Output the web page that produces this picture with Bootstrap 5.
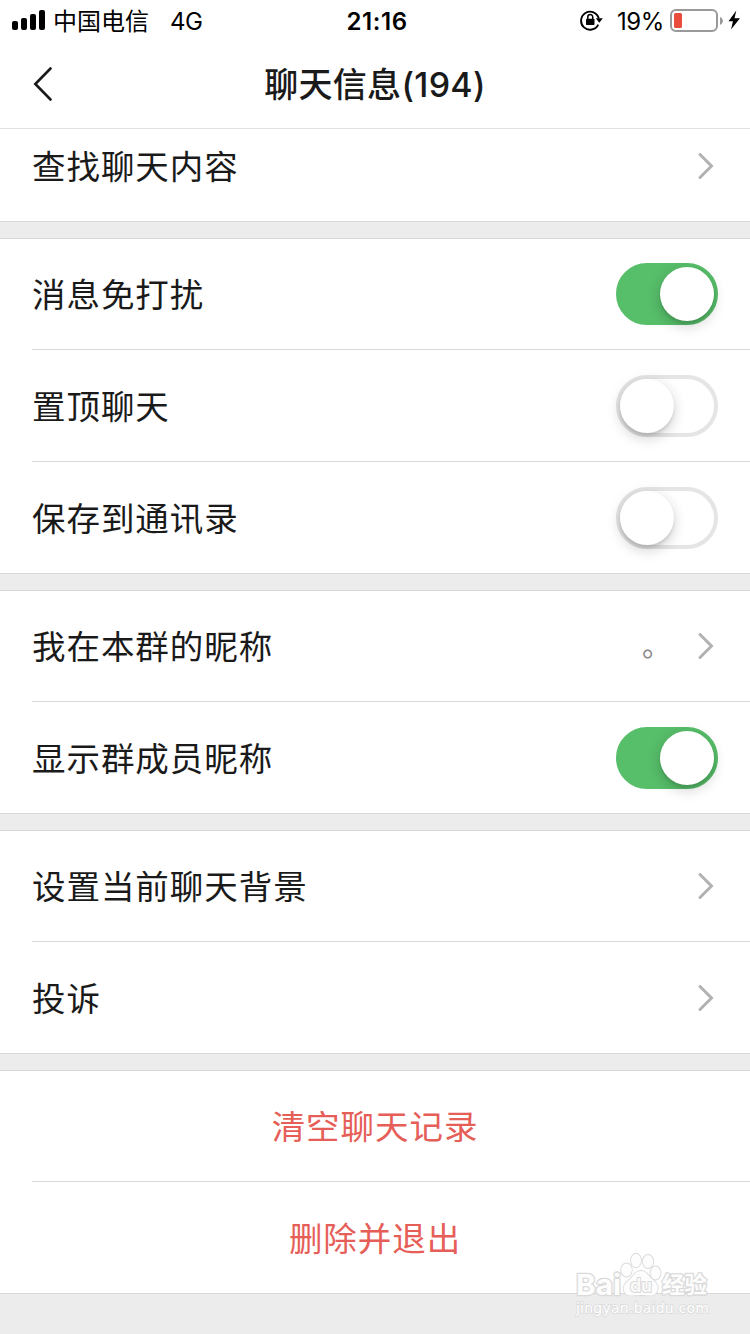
<!DOCTYPE html>
<html lang="zh-CN">
<head>
<meta charset="utf-8">
<meta name="viewport" content="width=device-width, initial-scale=1">
<title>聊天信息</title>
<link href="https://cdn.jsdelivr.net/npm/bootstrap@5.3.0/dist/css/bootstrap.min.css" rel="stylesheet">
<script src="https://cdn.jsdelivr.net/npm/bootstrap@5.3.0/dist/js/bootstrap.bundle.min.js" defer></script>
<style>
  body { background: #ececec; color: #1a1a1a; font-family: Inter, "Noto Sans CJK SC", sans-serif; height: 1334px; overflow: hidden; }
  .topbar { height: 129px; border-bottom: 1px solid #e2e2e2; }
  .status { height: 40px; font-size: 24px; line-height: 38px; color: #000; padding: 0 10px 0 12px; }
  .status span { padding-top: 3px; }
  .status .side { flex: 1 1 0; }
  .carrier { margin-left: 7px; }
  .network { margin-left: 21px; letter-spacing: -.6px; }
  .clock { font-weight: 600; letter-spacing: .6px; margin-left: 2px; }
  .percent { letter-spacing: -.4px; margin: 0 5px 0 14px; }
  .battery { margin-top: 2px; }
  .titlebar { height: 88px; padding: 2px 32px 0; }
  .titlebar h1 { font-size: 34px; font-weight: 500; line-height: 86px; letter-spacing: .3px; }
  .titlebar .edge { width: 40px; margin-top: -2px; }
  .group { background: #fff; border: solid #d9d9d9; border-width: 1px 0; margin-bottom: 16px; }
  .group .list-group-item { height: 112px; margin-left: 32px; padding: 0 32px 0 0; border: 0; border-bottom: 1px solid #d9d9d9; background: transparent; color: #1a1a1a; font-size: 33.5px; line-height: 48px; letter-spacing: .95px; }
  .group .list-group-item:first-child { height: 111px; }
  .group .list-group-item:last-child { border-bottom: 0; height: 111px; }
  .group.scrolled { border-top: 0; }
  .group.scrolled .list-group-item:only-child { height: 92px; padding-bottom: 18px; }
  .group .list-group-item.danger { color: #e65e58; }
  .group .list-group-item > span { padding-top: 1px; }
  .group .list-group-item:not(:first-child) > span { padding-top: 2px; }
  .chevron { margin-right: 3px; }
  .nickname { color: #888; margin-right: 25px; font-size: 29px; }
  .form-check-input.toggle { width: 102px; height: 62px; margin: 0; border: 4px solid #e5e5e5; border-radius: 31px; background: #fff; box-shadow: none; }
  .form-check-input.toggle::before { content: ""; display: block; width: 54px; height: 54px; border-radius: 50%; background: #fff; box-shadow: 0 6px 14px rgba(0,0,0,.14), 0 3px 3px rgba(0,0,0,.1), 0 0 16px rgba(0,0,0,.05); }
  .form-check-input.toggle:checked { background: #57be6a; border-color: #57be6a; }
  .form-check-input.toggle:checked::before { margin-left: 40px; }
  .watermark { right: 36px; bottom: 12px; }
</style>
</head>
<body>
<header class="topbar bg-white">
  <div class="status d-flex align-items-center">
    <div class="side d-flex align-items-center">
      <svg width="34" height="20" viewBox="0 0 34 20"><rect x="0" y="11" width="6" height="9" rx="2"/><rect x="9" y="8" width="6" height="12" rx="2"/><rect x="18" y="4" width="6" height="16" rx="2"/><rect x="27" y="0" width="6" height="20" rx="2"/></svg>
      <span class="carrier">中国电信</span><span class="network">4G</span>
    </div>
    <span class="clock">21:16</span>
    <div class="side d-flex align-items-center justify-content-end">
      <svg width="23" height="22" viewBox="0 0 23 22"><path d="M18.200 15.600A9 9 0 1 1 18.800 9.500" fill="none" stroke="#000" stroke-width="1.900"/><path d="M15.800 9.300H22.800L19.300 13.800Z"/><rect x="6" y="9.700" width="8.500" height="6.300" rx=".8"/><path d="M7.800 10V8a2.450 2.450 0 0 1 4.900 0v2" fill="none" stroke="#000" stroke-width="1.500"/></svg>
      <span class="percent">19%</span>
      <svg class="battery" width="71" height="24" viewBox="0 0 71 24"><rect x="2" y="1" width="46" height="21" rx="5" fill="none" stroke="#999" stroke-width="2"/><rect x="5" y="4" width="8" height="15" rx="1.500" fill="#eb4d3d"/><path d="M51 8c3.800 1.200 3.800 6.600 0 7.800Z" fill="#999"/><path d="M67.300 1.500 59.500 12.300h4.500L62 20.500 71 9.200h-5.500Z"/></svg>
    </div>
  </div>
  <nav class="titlebar d-flex align-items-center justify-content-between">
    <div class="edge d-flex"><svg width="22" height="34" viewBox="0 0 22 34"><path d="M18.500 1.500 3.300 17l15.200 15.500" fill="none" stroke="#1a1a1a" stroke-width="2.600" stroke-linecap="round"/></svg></div>
    <h1 class="m-0">聊天信息(194)</h1>
    <div class="edge"></div>
  </nav>
</header>
<main>
  <div class="group scrolled list-group list-group-flush">
    <div class="list-group-item d-flex align-items-center justify-content-between"><span>查找聊天内容</span><svg class="chevron" width="18" height="28" viewBox="0 0 18 28"><path d="M3 2.500 14.500 14 3 25.500" fill="none" stroke="#b2b2b2" stroke-width="3" stroke-linecap="round"/></svg></div>
  </div>
  <div class="group list-group list-group-flush">
    <label class="list-group-item d-flex align-items-center justify-content-between"><span>消息免打扰</span><input class="form-check-input toggle" type="checkbox" checked></label>
    <label class="list-group-item d-flex align-items-center justify-content-between"><span>置顶聊天</span><input class="form-check-input toggle" type="checkbox"></label>
    <label class="list-group-item d-flex align-items-center justify-content-between"><span>保存到通讯录</span><input class="form-check-input toggle" type="checkbox"></label>
  </div>
  <div class="group list-group list-group-flush">
    <div class="list-group-item d-flex align-items-center"><span>我在本群的昵称</span><span class="nickname ms-auto">。</span><svg class="chevron" width="18" height="28" viewBox="0 0 18 28"><path d="M3 2.500 14.500 14 3 25.500" fill="none" stroke="#b2b2b2" stroke-width="3" stroke-linecap="round"/></svg></div>
    <label class="list-group-item d-flex align-items-center justify-content-between"><span>显示群成员昵称</span><input class="form-check-input toggle" type="checkbox" checked></label>
  </div>
  <div class="group list-group list-group-flush">
    <div class="list-group-item d-flex align-items-center justify-content-between"><span>设置当前聊天背景</span><svg class="chevron" width="18" height="28" viewBox="0 0 18 28"><path d="M3 2.500 14.500 14 3 25.500" fill="none" stroke="#b2b2b2" stroke-width="3" stroke-linecap="round"/></svg></div>
    <div class="list-group-item d-flex align-items-center justify-content-between"><span>投诉</span><svg class="chevron" width="18" height="28" viewBox="0 0 18 28"><path d="M3 2.500 14.500 14 3 25.500" fill="none" stroke="#b2b2b2" stroke-width="3" stroke-linecap="round"/></svg></div>
  </div>
  <div class="group list-group list-group-flush">
    <div class="list-group-item danger d-flex align-items-center justify-content-center"><span>清空聊天记录</span></div>
    <div class="list-group-item danger d-flex align-items-center justify-content-center"><span>删除并退出</span></div>
  </div>
</main>
<svg class="watermark position-absolute" width="140" height="72" viewBox="0 0 140 72" fill="#fdfdfd" stroke="#dadada" stroke-width="1.300" paint-order="stroke">
  <g font-family="Inter, 'Noto Sans CJK SC', sans-serif" font-weight="700" stroke-width="2.600" stroke-linejoin="round">
    <text x="2" y="45" font-size="29" textLength="45" lengthAdjust="spacingAndGlyphs">Bai</text>
    <text x="88" y="43" font-size="23" textLength="45" lengthAdjust="spacingAndGlyphs">经验</text>
  </g>
  <g stroke-width="1.800">
    <ellipse cx="52.500" cy="20" rx="5.300" ry="6.500"/><ellipse cx="62" cy="10.500" rx="5" ry="6.800"/><ellipse cx="74" cy="11.500" rx="5.200" ry="6.500"/><ellipse cx="81.500" cy="23" rx="5" ry="6.500"/>
    <path d="M67 21c-6 0-8 6-12 9-5 4-7 8-4 13 3 4 10 2 16 2s12 2 15-2c4-5 1-10-4-14-4-3-5-8-11-8Z"/>
  </g>
  <text x="56" y="42" font-family="Inter, sans-serif" font-weight="600" font-size="18" textLength="22" lengthAdjust="spacingAndGlyphs" stroke-width="2" fill="#fafafa">du</text>
  <text x="2" y="62.500" font-family="'DejaVu Sans', sans-serif" font-size="14" textLength="133" stroke-width="1.500" fill="#fff">jingyan.baidu.com</text>
</svg>
</body>
</html>
